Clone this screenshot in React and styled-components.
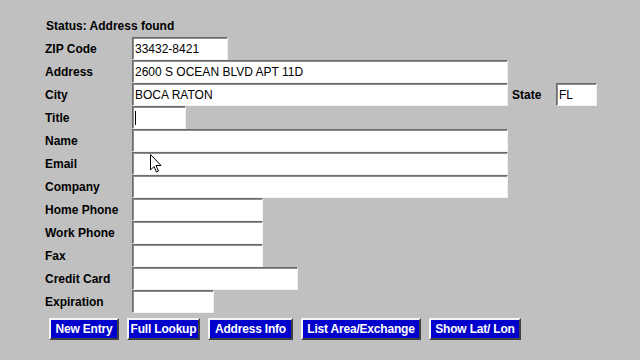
import React from "react";
import styled, { createGlobalStyle } from "styled-components";

const GlobalStyle = createGlobalStyle`
  html, body {
    margin: 0;
    padding: 0;
    background: #c0c0c0;
  }
  body {
    font-family: "Liberation Sans", Arial, sans-serif;
  }
`;

const Page = styled.div`
  position: relative;
  width: 640px;
  height: 360px;
  box-sizing: border-box;
  padding: 18px 0 0 45px;
  background: #c0c0c0;
  color: #000;
  overflow: hidden;
`;

const Status = styled.div`
  font-size: 12px;
  font-weight: bold;
  line-height: 16px;
  height: 16px;
  padding-left: 1px;
  margin-bottom: 3px;
`;

const Form = styled.div`
  display: grid;
  grid-template-columns: 87px auto;
  grid-auto-rows: 23px;
  align-items: center;
`;

const Label = styled.label`
  font-size: 12px;
  font-weight: bold;
  line-height: 24px;
`;

const Field = styled.div`
  position: relative;
  display: flex;
  align-items: center;
  height: 23px;
`;

const Input = styled.input`
  box-sizing: border-box;
  width: ${(p) => p.$w}px;
  height: 23px;
  margin: 0;
  padding: 1px 2px 0;
  background: #fff;
  border: 1px solid;
  border-color: #6c6c6c #f2f2f2 #f2f2f2 #6c6c6c;
  box-shadow: inset 1px 1px 0 #8c8c8c;
  font-family: "Liberation Sans", Arial, sans-serif;
  font-size: 12px;
  color: #000;
  outline: none;
  caret-color: #000;
`;

/* text caret drawn in the focused (Title) box */
const Caret = styled.span`
  position: absolute;
  left: 3px;
  top: 5px;
  width: 1px;
  height: 14px;
  background: #000;
`;

const SideLabel = styled(Label)`
  margin-left: 4px;
  width: 44px;
`;

const ButtonRow = styled.div`
  display: flex;
  gap: 8px;
  margin-top: 5px;
  padding-left: 4px;
`;

const Button = styled.button`
  box-sizing: border-box;
  width: ${(p) => p.$w}px;
  height: 22px;
  padding: 0;
  margin: 0;
  background: #0000cc;
  color: #fff;
  font-family: "Liberation Sans", Arial, sans-serif;
  font-size: 12px;
  font-weight: bold;
  letter-spacing: -0.2px;
  white-space: nowrap;
  border: 2px solid;
  border-color: #f4f4f4 #404040 #404040 #f4f4f4;
  cursor: default;
`;

const Cursor = styled.svg`
  position: absolute;
  left: 150px;
  top: 154px;
  width: 12px;
  height: 19px;
  pointer-events: none;
`;

const fields = [
  { label: "ZIP Code", w: 96, value: "33432-8421" },
  { label: "Address", w: 376, value: "2600 S OCEAN BLVD APT 11D" },
  { label: "City", w: 376, value: "BOCA RATON", state: "FL" },
  { label: "Title", w: 54, value: "", focus: true },
  { label: "Name", w: 376, value: "" },
  { label: "Email", w: 376, value: "" },
  { label: "Company", w: 376, value: "" },
  { label: "Home Phone", w: 131, value: "" },
  { label: "Work Phone", w: 131, value: "" },
  { label: "Fax", w: 131, value: "" },
  { label: "Credit Card", w: 166, value: "" },
  { label: "Expiration", w: 82, value: "" },
];

const buttons = [
  { text: "New Entry", w: 70 },
  { text: "Full Lookup", w: 73 },
  { text: "Address Info", w: 85 },
  { text: "List Area/Exchange", w: 120 },
  { text: "Show Lat/ Lon", w: 92 },
];

export default function App() {
  return (
    <Page>
      <GlobalStyle />
      <Status>Status: Address found</Status>
      <Form>
        {fields.map((f) => (
          <React.Fragment key={f.label}>
            <Label>{f.label}</Label>
            <Field>
              <Input $w={f.w} defaultValue={f.value} />
              {f.focus && <Caret />}
              {f.state && (
                <>
                  <SideLabel>State</SideLabel>
                  <Input $w={41} defaultValue={f.state} />
                </>
              )}
            </Field>
          </React.Fragment>
        ))}
      </Form>
      <ButtonRow>
        {buttons.map((b) => (
          <Button key={b.text} $w={b.w}>
            {b.text}
          </Button>
        ))}
      </ButtonRow>
      <Cursor viewBox="0 0 12 19">
        <path
          d="M0.5 0.5 L0.5 16 L4 12.5 L6.5 18 L8.5 17 L6 11.5 L11 11.5 Z"
          fill="#fff"
          stroke="#000"
          strokeWidth="1"
        />
      </Cursor>
    </Page>
  );
}
